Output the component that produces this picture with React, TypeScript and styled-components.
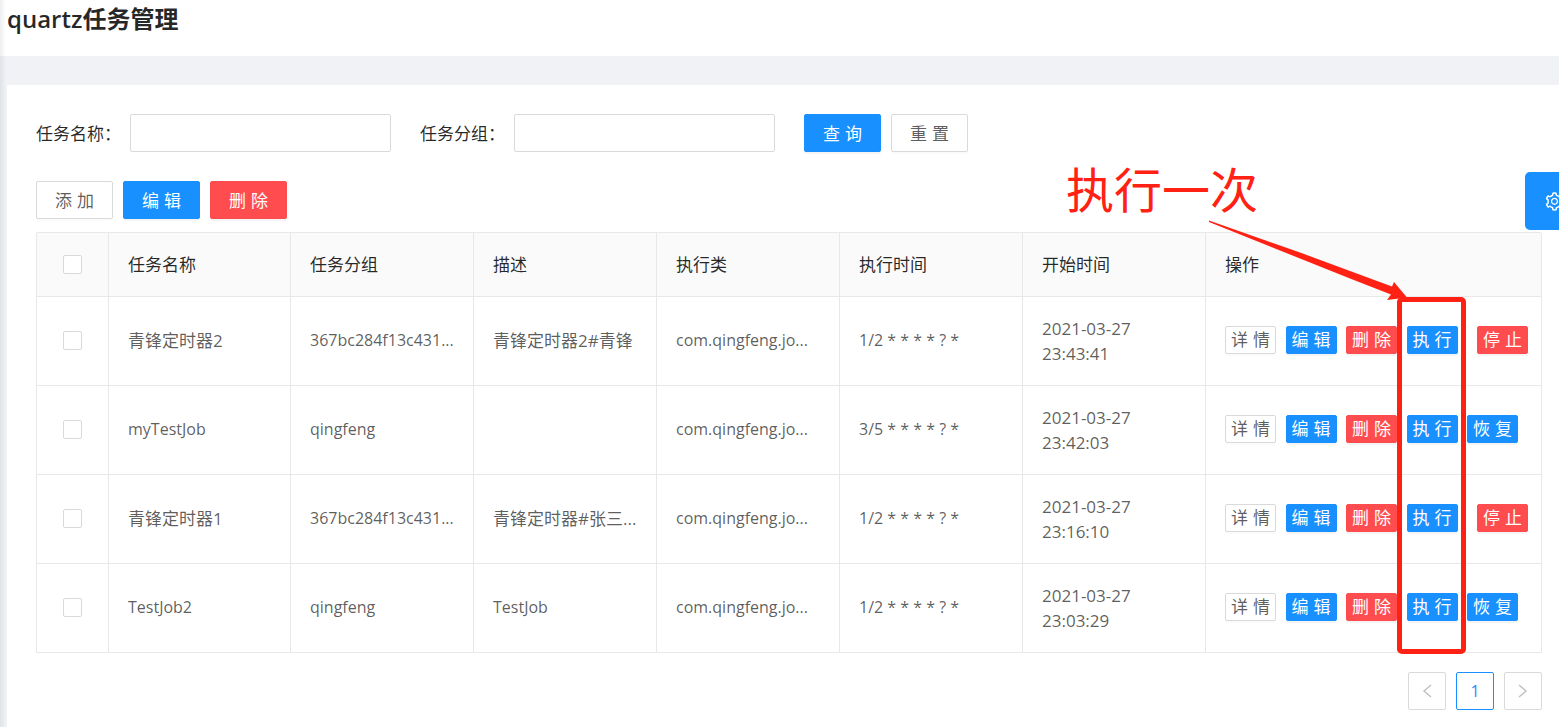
import React from 'react';
import styled, { createGlobalStyle, css } from 'styled-components';
import { AiOutlineSetting } from 'react-icons/ai';

const GlobalStyle = createGlobalStyle`
  *, *::before, *::after { box-sizing: border-box; }
  body {
    margin: 0;
    background: #f0f2f5;
    color: rgba(0, 0, 0, 0.65);
    font-family: 'Open Sans', 'Noto Sans CJK SC', sans-serif;
    font-size: 17px;
    line-height: 25px;
  }
  button, input { font-family: inherit; font-size: inherit; }
`;

const Page = styled.div`
  position: relative;
  min-height: 100vh;
  display: flex;
  flex-direction: column;
  overflow: hidden;
`;

const SideShadow = styled.div`
  position: absolute;
  inset: 0 auto 0 0;
  width: 6px;
  background: linear-gradient(to right, rgba(0, 21, 41, 0.07), rgba(0, 21, 41, 0));
`;

const PageHeader = styled.header`
  height: 56px;
  padding: 0 7px;
  background: #fff;
`;

const Title = styled.h1`
  margin: 0;
  color: rgba(0, 0, 0, 0.85);
  font-size: 24px;
  font-weight: 600;
  line-height: 38px;
`;

const Card = styled.main`
  flex: 1;
  margin: 29px 0 0 7px;
  padding: 29px 17px 16px 29px;
  background: #fff;
  border-radius: 2px 0 0 0;
`;

const SearchForm = styled.form`
  display: flex;
  align-items: center;
  gap: 29px;
  margin-bottom: 29px;
`;

const Field = styled.label`
  display: flex;
  align-items: center;
  color: rgba(0, 0, 0, 0.85);
`;

const FieldLabel = styled.span`
  width: 94px;
`;

const TextInput = styled.input`
  width: 261px;
  height: 38px;
  padding: 4px 13px;
  border: 1px solid #d9d9d9;
  border-radius: 2px;
  outline: none;
`;

const ButtonRow = styled.div`
  display: flex;
  gap: 10px;
`;

type Tone = 'plain' | 'primary' | 'danger';

const tones = {
  plain: css`
    background: #fff;
    border-color: #d9d9d9;
    color: rgba(0, 0, 0, 0.65);
    box-shadow: 0 2px 0 rgba(0, 0, 0, 0.015);
  `,
  primary: css`
    background: #1890ff;
    border-color: #1890ff;
    color: #fff;
    box-shadow: 0 2px 0 rgba(0, 0, 0, 0.045);
  `,
  danger: css`
    background: #ff4d4f;
    border-color: #ff4d4f;
    color: #fff;
    box-shadow: 0 2px 0 rgba(0, 0, 0, 0.045);
  `,
};

const Button = styled.button<{ $tone: Tone; $small?: boolean; $offset?: boolean }>`
  display: flex;
  align-items: center;
  justify-content: center;
  gap: 5px;
  width: ${(p) => (p.$small ? 51 : 77)}px;
  height: ${(p) => (p.$small ? 28 : 38)}px;
  margin-left: ${(p) => (p.$offset ? 10 : 0)}px;
  padding: ${(p) => (p.$small ? 0 : '2px 0 0')};
  border: 1px solid;
  border-radius: 2px;
  line-height: 20px;
  white-space: nowrap;
  cursor: pointer;
  ${(p) => tones[p.$tone]}
`;

const TableArea = styled.div`
  position: relative;
  margin-top: 13px;
`;

const Table = styled.table`
  width: 100%;
  table-layout: fixed;
  border-collapse: separate;
  border-spacing: 0;
  border: 1px solid #e8e8e8;
  border-width: 1px 0 0 1px;
  border-radius: 2px 2px 0 0;
`;

const CheckCol = styled.col`
  width: 72px;
`;

const NameCol = styled.col`
  width: 182px;
`;

const ActionCol = styled.col`
  width: 336px;
`;

const cell = css`
  padding: 0 19px;
  border: 1px solid #e8e8e8;
  border-width: 0 1px 1px 0;
  text-align: left;
  overflow: hidden;
  text-overflow: ellipsis;
`;

const HeadCell = styled.th`
  ${cell}
  height: 64px;
  background: #fafafa;
  color: rgba(0, 0, 0, 0.85);
  font-weight: 400;
`;

const Cell = styled.td<{ $wrap?: boolean; $latin?: boolean }>`
  ${cell}
  height: 89px;
  padding-bottom: ${(p) => (p.$wrap ? 0 : 2)}px;
  font-size: ${(p) => (p.$latin ? 16 : 17)}px;
  white-space: ${(p) => (p.$wrap ? 'normal' : 'nowrap')};
`;

const Checkbox = styled.input.attrs({ type: 'checkbox' })`
  appearance: none;
  display: block;
  width: 19px;
  height: 19px;
  margin: 0 auto;
  border: 1px solid #d9d9d9;
  border-radius: 2px;
  background: #fff;
`;

const Actions = styled.div`
  display: grid;
  grid-template-columns: repeat(5, 51px);
  justify-content: space-between;
  width: 293px;
`;

const Pagination = styled.nav`
  display: flex;
  justify-content: flex-end;
  gap: 10px;
  margin-top: 19px;
`;

const PageButton = styled.button<{ $active?: boolean }>`
  display: flex;
  align-items: center;
  justify-content: center;
  width: 38px;
  height: 38px;
  padding: 0;
  border: 1px solid ${(p) => (p.$active ? '#1890ff' : '#d9d9d9')};
  border-radius: 2px;
  background: #fff;
  color: ${(p) => (p.$active ? '#1890ff' : 'rgba(0, 0, 0, 0.25)')};
  font-size: 16px;
  line-height: 24px;
`;

const SettingsHandle = styled.button`
  position: absolute;
  top: 172px;
  right: -24px;
  display: flex;
  align-items: center;
  justify-content: center;
  width: 58px;
  height: 58px;
  padding: 0;
  border: 0;
  border-radius: 5px 0 0 5px;
  background: #1890ff;
  color: #fff;
`;

const Highlight = styled.div`
  position: absolute;
  top: 65px;
  right: 76px;
  width: 69px;
  height: 357px;
  border: 5px solid #ff2113;
  border-radius: 5px;
  pointer-events: none;
`;

const Callout = styled.div`
  position: absolute;
  top: -80px;
  right: 284px;
  color: #ff2113;
  font-family: 'Noto Sans CJK SC', sans-serif;
  font-size: 48px;
  line-height: 70px;
  white-space: nowrap;
`;

const Arrow = styled.svg`
  position: absolute;
  top: -12px;
  right: 132px;
  pointer-events: none;
`;

interface Job {
  name: string;
  group: string;
  desc: string;
  cron: string;
  date: string;
  time: string;
  running: boolean;
}

const jobs: Job[] = [
  { name: '青锋定时器2', group: '367bc284f13c431...', desc: '青锋定时器2#青锋', cron: '1/2 * * * * ? *', date: '2021-03-27', time: '23:43:41', running: true },
  { name: 'myTestJob', group: 'qingfeng', desc: '', cron: '3/5 * * * * ? *', date: '2021-03-27', time: '23:42:03', running: false },
  { name: '青锋定时器1', group: '367bc284f13c431...', desc: '青锋定时器#张三...', cron: '1/2 * * * * ? *', date: '2021-03-27', time: '23:16:10', running: true },
  { name: 'TestJob2', group: 'qingfeng', desc: 'TestJob', cron: '1/2 * * * * ? *', date: '2021-03-27', time: '23:03:29', running: false },
];

const headings = ['任务名称', '任务分组', '描述', '执行类', '执行时间', '开始时间', '操作'];

const isLatin = (text: string) => /^[\x20-\x7e]*$/.test(text);

function TextCell({ text }: { text: string }) {
  return <Cell $latin={isLatin(text)}>{text}</Cell>;
}

interface ActionButtonProps {
  label: string;
  tone: Tone;
  small?: boolean;
  offset?: boolean;
}

function ActionButton({ label, tone, small, offset }: ActionButtonProps) {
  return (
    <Button type="button" $tone={tone} $small={small} $offset={offset} aria-label={label}>
      {Array.from(label).map((char) => (
        <span key={char}>{char}</span>
      ))}
    </Button>
  );
}

function Chevron({ points }: { points: string }) {
  return (
    <svg width="10" height="14" viewBox="0 0 10 14" fill="none" stroke="currentColor" strokeWidth="1.4" aria-hidden="true">
      <polyline points={points} />
    </svg>
  );
}

export default function App() {
  return (
    <Page>
      <GlobalStyle />
      <PageHeader>
        <Title>quartz任务管理</Title>
      </PageHeader>
      <Card>
        <SearchForm>
          <Field>
            <FieldLabel>任务名称：</FieldLabel>
            <TextInput type="text" name="name" />
          </Field>
          <Field>
            <FieldLabel>任务分组：</FieldLabel>
            <TextInput type="text" name="group" />
          </Field>
          <ButtonRow>
            <ActionButton label="查询" tone="primary" />
            <ActionButton label="重置" tone="plain" />
          </ButtonRow>
        </SearchForm>
        <ButtonRow>
          <ActionButton label="添加" tone="plain" />
          <ActionButton label="编辑" tone="primary" />
          <ActionButton label="删除" tone="danger" />
        </ButtonRow>
        <TableArea>
          <Table>
            <colgroup>
              <CheckCol />
              <NameCol />
              <col span={5} />
              <ActionCol />
            </colgroup>
            <thead>
              <tr>
                <HeadCell>
                  <Checkbox aria-label="全选" />
                </HeadCell>
                {headings.map((heading) => (
                  <HeadCell key={heading}>{heading}</HeadCell>
                ))}
              </tr>
            </thead>
            <tbody>
              {jobs.map((job) => (
                <tr key={job.name}>
                  <Cell>
                    <Checkbox aria-label={job.name} />
                  </Cell>
                  <TextCell text={job.name} />
                  <TextCell text={job.group} />
                  <TextCell text={job.desc} />
                  <TextCell text="com.qingfeng.jo..." />
                  <TextCell text={job.cron} />
                  <Cell $wrap>
                    {job.date}
                    <br />
                    {job.time}
                  </Cell>
                  <Cell>
                    <Actions>
                      <ActionButton label="详情" tone="plain" small />
                      <ActionButton label="编辑" tone="primary" small />
                      <ActionButton label="删除" tone="danger" small />
                      <ActionButton label="执行" tone="primary" small />
                      {job.running ? (
                        <ActionButton label="停止" tone="danger" small offset />
                      ) : (
                        <ActionButton label="恢复" tone="primary" small />
                      )}
                    </Actions>
                  </Cell>
                </tr>
              ))}
            </tbody>
          </Table>
          <Highlight />
          <Callout>执行一次</Callout>
          <Arrow width="202" height="82" viewBox="0 0 202 82" aria-hidden="true">
            <path d="M1 0.6 L92 32.5 L142 51 L184 66.5 L186 62 L199 77.5 L179 80 L183 74.5 L142 58.5 L92 38.5 L1 2 Z" fill="#ff2113" />
          </Arrow>
        </TableArea>
        <Pagination aria-label="分页">
          <PageButton type="button" aria-label="上一页">
            <Chevron points="9,1 2,7 9,13" />
          </PageButton>
          <PageButton type="button" $active aria-current="page">
            1
          </PageButton>
          <PageButton type="button" aria-label="下一页">
            <Chevron points="1,1 8,7 1,13" />
          </PageButton>
        </Pagination>
      </Card>
      <SideShadow />
      <SettingsHandle type="button" aria-label="设置">
        <AiOutlineSetting size={21} />
      </SettingsHandle>
    </Page>
  );
}
